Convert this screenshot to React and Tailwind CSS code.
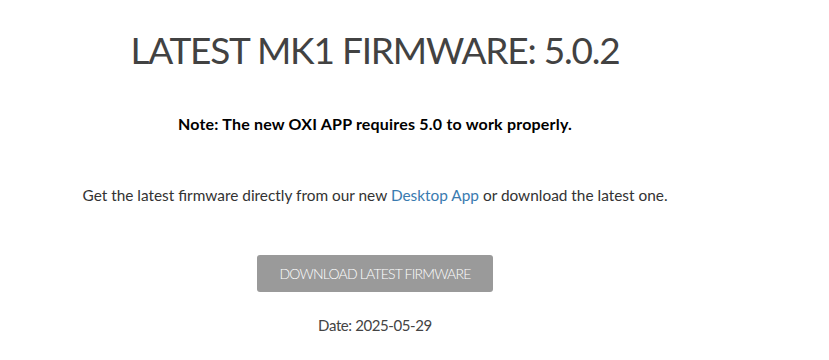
import React from 'react';

export default function App() {
  return (
    <div className="w-[829px] h-[360px] bg-white overflow-hidden">
      <div className="w-[750px] flex flex-col items-center font-['Lato',sans-serif]">
        <h1 className="mt-[26px] text-[37px] leading-[48px] tracking-[-1.2px] text-[#424242]">LATEST MK1 FIRMWARE: 5.0.2</h1>
        <p className="mt-[40px] text-[16px] leading-[20px] tracking-[0.2px] font-bold text-black">Note: The new OXI APP requires 5.0 to work properly.</p>
        <p className="mt-[51px] text-[15.4px] leading-[20px] text-[#333]">
          Get the latest firmware directly from our new <a href="#" className="text-[#3a7bb0]">Desktop App</a> or download the latest one.
        </p>
        <button className="mt-[50px] w-[236px] h-[37px] rounded-[3px] bg-[#9a9a9a] text-white text-[14px] tracking-[-0.8px] font-light">DOWNLOAD LATEST FIRMWARE</button>
        <div className="mt-[23px] text-[15px] leading-[20px] tracking-[-0.4px] text-[#444]">Date: 2025-05-29</div>
      </div>
    </div>
  );
}
